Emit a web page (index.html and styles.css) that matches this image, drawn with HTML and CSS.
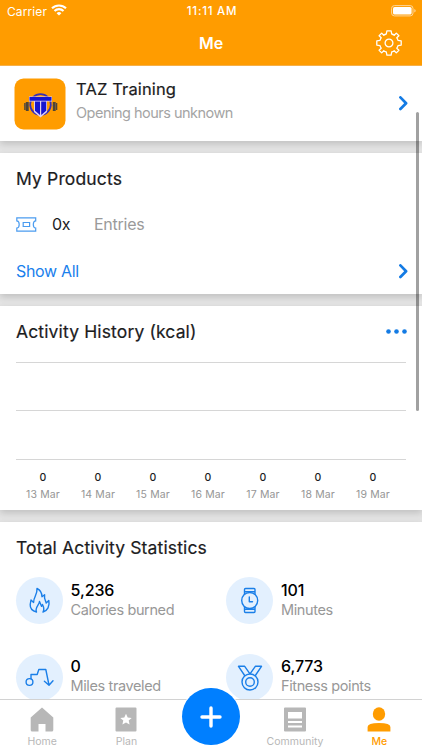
FILE: index.html
```html
<!DOCTYPE html>
<html lang="en">
<head>
<meta charset="utf-8">
<title>Me</title>
<link rel="stylesheet" href="styles.css">
</head>
<body>
<div class="app">
  <header class="top">
    <div class="status">
      <div class="carrier"><span>Carrier</span>
        <svg width="16" height="12" viewBox="0 0 16 12" fill="none" stroke="#fff" stroke-width="2.1"><path d="M1 4.3a10 10 0 0 1 14 0M3.5 7a6.4 6.4 0 0 1 9 0"/><path d="M8 11.6 5.6 9.2a3.5 3.5 0 0 1 4.8 0z" fill="#fff" stroke="none"/></svg>
      </div>
      <span class="clock">11:11 AM</span>
      <svg class="battery" width="25" height="12" viewBox="0 0 25 12"><rect x=".6" y=".6" width="21.4" height="10.3" rx="2.8" fill="none" stroke="#ffd699"/><rect x="2" y="2" width="18.6" height="7.5" rx="1.6" fill="#fff"/><path d="M23.3 4v3.6q1.4-.6 1.4-1.8T23.3 4" fill="#ffd699"/></svg>
    </div>
    <div class="nav">
      <span></span>
      <h1>Me</h1>
      <svg class="gear" width="28" height="28" viewBox="-14 -14 28 28" fill="none" stroke="#fff" stroke-width="1.3" stroke-linejoin="round"><circle r="3.9"/><path d="M-2.1-12.2H2.1L2.7-9Q4.2-8.6 5.2-7.8L7.3-9.9 9.9-7.3 7.8-5.2Q8.6-4.2 9-2.7L12.2-2.1V2.1L9 2.7Q8.6 4.2 7.8 5.2L9.9 7.3 7.3 9.9 5.2 7.8Q4.2 8.6 2.7 9L2.1 12.2H-2.1L-2.7 9Q-4.2 8.6-5.2 7.8L-7.3 9.9-9.9 7.3-7.8 5.2Q-8.6 4.2-9 2.7L-12.2 2.1V-2.1L-9-2.7Q-8.6-4.2-7.8-5.2L-9.9-7.3-7.3-9.9-5.2-7.8Q-4.2-8.6-2.7-9z"/></svg>
    </div>
  </header>

  <main class="content">
    <section class="card gym">
      <svg class="logo" width="52" height="52" viewBox="0 0 52 52"><rect x=".5" y=".5" width="51" height="51" rx="9" fill="#ff9c00"/><path d="M9.5 27.5H43" stroke="#c5924e"/><circle cx="26.5" cy="26.5" r="10.3" fill="#ff9c00" stroke="#3a2fb4" stroke-width="1.7"/><path d="M10.2 25h1.300v7h-1.300zM11.800 24h2.900v9h-2.900zM38.800 24h2.900v9h-2.900zM42 25h1.300v7H42z" fill="#4d4438"/><path d="M15 18.500h23v4.900h-5V34l-6.500 5.500L20 34V23.400h-5z" fill="#e0d0f0"/><path d="M15.500 19h22v3.700h-22zM21 23.400h5V37l-5-4.200zM27.200 23.400h5v9.400l-5 4.200z" fill="#1515cf"/></svg>
      <div class="gym-text"><h2>TAZ Training</h2><p>Opening hours unknown</p></div>
      <svg class="chevron" width="9" height="15" viewBox="0 0 9 15"><path d="m1.4 1.4 5.7 5.8-5.7 5.8"/></svg>
    </section>

    <section class="card products">
      <h2>My Products</h2>
      <div class="entries">
        <svg width="21" height="15" viewBox="0 0 21 15" fill="none" stroke="#4b9cf0" stroke-width="1.2"><path d="M.8.8h18.900v3.100q-2.400.2-2.400 3.600t2.400 3.600v3.100H.8v-3.100q2.400-.2 2.400-3.600T.8 3.900z"/><path d="M7.200 5.500h6.400v4H7.200z"/></svg>
        <span class="count">0x</span><span class="muted">Entries</span>
      </div>
      <div class="show"><a>Show All</a><svg class="chevron" width="9" height="15" viewBox="0 0 9 15"><path d="m1.4 1.4 5.7 5.8-5.7 5.8"/></svg></div>
    </section>

    <section class="card history">
      <div class="history-head"><h2>Activity History (kcal)</h2>
        <svg width="21" height="5" viewBox="0 0 21 5" fill="#147be4"><circle cx="2.5" cy="2.5" r="2.3"/><circle cx="10.5" cy="2.5" r="2.3"/><circle cx="18.5" cy="2.5" r="2.3"/></svg>
      </div>
      <div class="chart"><i></i><i></i></div>
      <div class="days">
        <div><b>0</b><span>13 Mar</span></div>
        <div><b>0</b><span>14 Mar</span></div>
        <div><b>0</b><span>15 Mar</span></div>
        <div><b>0</b><span>16 Mar</span></div>
        <div><b>0</b><span>17 Mar</span></div>
        <div><b>0</b><span>18 Mar</span></div>
        <div><b>0</b><span>19 Mar</span></div>
      </div>
    </section>

    <section class="card stats">
      <h2>Total Activity Statistics</h2>
      <div class="grid">
        <div class="stat">
          <svg class="disc" width="47" height="47" viewBox="0 0 47 47"><path d="M20.500 35C16.500 34 14 31 14.200 27.500L15 23l2.600 2.400C17.500 20 21.500 18 21 11.500c3 1.500 5 4.500 5 8.300l2.600-2c-.7 3.700.9 5.500 1.600 8.200l2.600-2.500C34 29 31.500 33.800 27 35c1.500-2.500 1-4.500-.5-7.500l-1 1.800-2-4.800c-.2 3.500-5 6-3 10.500z"/></svg>
          <div><strong>5,236</strong><span>Calories burned</span></div>
        </div>
        <div class="stat">
          <svg class="disc" width="47" height="47" viewBox="0 0 47 47"><path d="M18.500 18v-5.500q0-1 1-1h8.500q1 0 1 1V18M18.500 29v5.500q0 1 1 1h8.500q1 0 1-1V29M19 14.800h9.500M19 32.300h9.500"/><circle cx="23.700" cy="23.500" r="8" fill="#e3f0fe"/><path d="M23.300 20v4.800h3.200"/></svg>
          <div><strong>101</strong><span>Minutes</span></div>
        </div>
        <div class="stat">
          <svg class="disc" width="47" height="47" viewBox="0 0 47 47"><circle cx="13.500" cy="28" r="3.400"/><path d="M15 24.800v-4.300h6.200l1.600-5h7L33 31M28.400 27.300 33 31.200l4-4.500"/></svg>
          <div><strong>0</strong><span>Miles traveled</span></div>
        </div>
        <div class="stat">
          <svg class="disc" width="47" height="47" viewBox="0 0 47 47"><path d="m19 22-6.500-9.700h6.200l5.600 8M29 22l6.500-9.700h-6.200l-5.600 8"/><circle cx="24" cy="28" r="8" fill="#e3f0fe"/><circle cx="24" cy="28" r="4.300"/></svg>
          <div><strong>6,773</strong><span>Fitness points</span></div>
        </div>
      </div>
    </section>
    <div class="scrollbar"></div>
  </main>

  <nav class="tabs">
    <div class="tab"><svg width="24" height="25" viewBox="0 0 24 25"><path d="M12 .4 23.300 10.500V23q0 1.500-1.500 1.500H15.500V17h-7v7.500H2.200Q.7 24.500.7 23V10.500z"/></svg><span>Home</span></div>
    <div class="tab"><svg width="24" height="25" viewBox="0 0 24 25"><path fill-rule="evenodd" d="M2.500.4h19q1 0 1 1v22q0 1-1 1h-19q-1 0-1-1v-22q0-1 1-1M12 6.800l-1.700 3.700-4 .4 3 2.700-.9 4 3.600-2 3.600 2-.9-4 3-2.700-4-.4z"/></svg><span>Plan</span></div>
    <div class="tab"></div>
    <div class="tab"><svg width="24" height="25" viewBox="0 0 24 25"><path fill-rule="evenodd" d="M2 .4h20q1 0 1 1v22q0 1-1 1H2q-1 0-1-1v-22q0-1 1-1M5 5v6.500h14V5zM5 14v2h14v-2zM5 18.500v2h14v-2z"/></svg><span>Community</span></div>
    <div class="tab active"><svg width="24" height="25" viewBox="0 0 24 25"><ellipse cx="12" cy="7" rx="6.200" ry="6.700"/><path d="M.6 24.500V20q0-4 11.400-4t11.400 4v4.500z"/></svg><span>Me</span></div>
    <div class="fab"><svg width="22" height="22" viewBox="0 0 22 22"><path d="M11 2v18M2 11h18" stroke="#fff" stroke-width="3.4" stroke-linecap="round"/></svg></div>
  </nav>
</div>
</body>
</html>
```
FILE: styles.css
```css
* { box-sizing: border-box; margin: 0; padding: 0; }
body { font-family: Inter, "Liberation Sans", sans-serif; color: #1c1c1e; background: #fff; }
svg { display: block; flex: none; }
.app { width: 422px; height: 750px; overflow: hidden; display: flex; flex-direction: column; }
.top { height: 66px; background: #ff9c00; color: #fff; border-bottom: 1px solid #f5b04a; flex: none; }
.status { height: 22px; display: grid; grid-template-columns: 1fr auto 1fr; align-items: center; padding: 0 6px 0 7px; font-size: 12px; }
.carrier { display: flex; align-items: center; gap: 4px; letter-spacing: .1px; }
.carrier svg { margin-top: -2px; }
.clock { font-weight: 500; font-size: 11.5px; letter-spacing: .75px; margin-right: -1px; }
.battery { justify-self: end; margin-top: -1px; }
.nav { height: 42px; display: grid; grid-template-columns: 1fr auto 1fr; align-items: center; padding: 0 19px 0 20px; }
.nav h1 { font-size: 16px; font-weight: 600; margin-right: 1px; }
.gear { justify-self: end; }
.content { flex: 1; min-height: 0; overflow: hidden; position: relative; display: flex; flex-direction: column; gap: 12px; background: #e4e4e4; }
.card { background: #fff; flex: none; box-shadow: 0 3px 7px rgba(0,0,0,.16); padding: 0 16px; }
h2 { font-size: 17.5px; font-weight: 400; line-height: 24px; letter-spacing: .14px; -webkit-text-stroke: .2px currentColor; }
.gym { height: 75px; display: flex; align-items: center; padding: 0 14px; }
.gym-text { flex: 1; margin-left: 10px; margin-top: -8px; }
.gym h2 { font-size: 16.5px; line-height: 22px; }
.gym p { font-size: 14.5px; line-height: 18px; color: #a4a4a4; margin-top: 4px; letter-spacing: -.51px; }
.chevron { fill: none; stroke: #147be4; stroke-width: 2.7; stroke-linecap: round; stroke-linejoin: round; }
.products { height: 141px; padding-top: 14px; }
.entries { display: flex; align-items: center; height: 20px; margin-top: 23px; font-size: 16px; letter-spacing: -.25px; }
.count { width: 42px; margin-left: 15px; }
.muted { color: #9a9a9a; }
.show { display: flex; justify-content: space-between; align-items: center; margin-top: 27px; height: 20px; font-size: 16px; letter-spacing: -.33px; color: #1a80ec; }
.products .chevron { margin-right: -2px; }
.history { height: 204px; padding-top: 14px; }
.history-head { display: flex; align-items: center; justify-content: space-between; height: 24px; }
.history-head svg { margin-right: -1px; margin-top: -1px; }
.chart { height: 98px; margin-top: 18px; border: 1px solid #d6d6d6; border-width: 1px 0; display: grid; grid-template-rows: 48px 48px; }
.chart i { border-bottom: 1px solid #d6d6d6; }
.chart i:last-child { border: 0; }
.days { display: grid; grid-template-columns: repeat(7, 55px); width: 385px; margin: 9px 0 0 -.5px; text-align: center; }
.days b { display: block; font-size: 10.5px; font-weight: 500; line-height: 17px; }
.days span { display: block; font-size: 10.5px; line-height: 18px; color: #969696; letter-spacing: .15px; }
.stats { height: 240px; padding-top: 14px; }
.grid { display: grid; grid-template-columns: 210.5px 1fr; row-gap: 29.5px; margin-top: 17px; margin-left: -.5px; }
.stat { display: flex; align-items: center; gap: 8px; }
.disc { fill: none; stroke: #1b7fe8; stroke-width: 1.4; stroke-linecap: round; stroke-linejoin: round; background: #e3f0fe; border-radius: 50%; }
.stat strong { display: block; font-size: 16px; font-weight: 500; line-height: 19px; color: #000; letter-spacing: -.1px; }
.stat span { display: block; font-size: 14.5px; line-height: 19px; color: #989898; letter-spacing: -.38px; }
.stat > div { margin-top: -2px; }
.scrollbar { position: absolute; top: 46px; right: 3.5px; width: 3px; height: 299px; border-radius: 2px; background: rgba(0,0,0,.37); }
.tabs { height: 51px; flex: none; position: relative; background: #fff; border-top: 1px solid #d2d2d2; display: grid; grid-template-columns: repeat(5, 84.3px); }
.tab { display: flex; flex-direction: column; align-items: center; padding-top: 7px; color: #b7b7b7; fill: #b7b7b7; }
.tab span { font-size: 10.5px; line-height: 14px; margin-top: 3px; }
.active { color: #ff9c00; fill: #ff9c00; }
.active span { font-weight: 500; }
.fab { position: absolute; left: 182.3px; top: -12px; width: 57.4px; height: 57.4px; border-radius: 50%; background: #007fff; box-shadow: 0 0 0 1px #fff; display: flex; align-items: center; justify-content: center; }
```
